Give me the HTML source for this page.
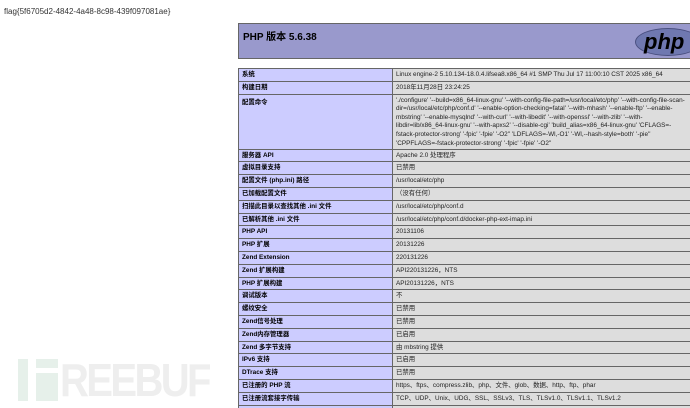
<!DOCTYPE html>
<html><head><meta charset="utf-8"><style>
body{margin:0;width:690px;height:408px;overflow:hidden;background:#fff;font-family:"Liberation Sans","Noto Sans CJK SC",sans-serif;position:relative}
.flag{position:absolute;left:4px;top:7px;font-size:8px;color:#333}
.hd{position:absolute;left:238px;top:23px;width:452px;height:36px;background:#9999cc;border:1px solid #666;border-right:none;box-sizing:border-box;overflow:hidden}
.hd h1{margin:0;position:absolute;left:4px;top:4px;font-size:10px;font-weight:bold;color:#000}
.logo{position:absolute;left:396px;top:4px;width:66px;height:28px;border-radius:50%;background:#6f78b0;border:1px solid #4a5080;color:#000;font:italic bold 22px "Liberation Sans",sans-serif;line-height:26px;text-indent:8px;box-sizing:border-box}
.wrap{position:absolute;left:238px;top:68px;width:452px;overflow:hidden;height:340px}
table{width:460px;border-collapse:collapse;font-size:6.4px}
td{border:1px solid #666;padding:0 3px;height:11.8px;vertical-align:top;line-height:11px;color:#222}
td.e{background:#ccccff;width:147px;font-weight:bold;color:#000}
td.v{background:#dddddd}
td.m{padding-top:2px;height:51px}
td.m div{height:52px;overflow:hidden;line-height:8.6px;padding-right:4px}
.wm{position:absolute;left:18px;top:359px;height:42px}
.wm .b1{position:absolute;left:0;top:0;width:10px;height:42px;background:#e6f0ea}
.wm .b2{position:absolute;left:18px;top:0;width:22px;height:9px;background:#e6f0ea}
.wm .b3{position:absolute;left:18px;top:14px;width:22px;height:28px;background:#e6f0ea}
.wm span{position:absolute;left:42px;top:-6px;font:bold 46px "Liberation Sans",sans-serif;color:#eeeeee;letter-spacing:-3px;transform:scaleX(0.87);transform-origin:left}
</style></head><body>
<div class="flag">flag{5f6705d2-4842-4a48-8c98-439f097081ae}</div>
<div class="wm"><div class="b1"></div><div class="b2"></div><div class="b3"></div><span>REEBUF</span></div>
<div class="hd"><h1>PHP 版本 5.6.38</h1><div class="logo">php</div></div>
<div class="wrap"><table>
<tr><td class="e">系统</td><td class="v">Linux engine-2 5.10.134-18.0.4.lifsea8.x86_64 #1 SMP Thu Jul 17 11:00:10 CST 2025 x86_64</td></tr>
<tr><td class="e">构建日期</td><td class="v">2018年11月28日 23:24:25</td></tr>
<tr><td class="e m">配置命令</td><td class="v m"><div>'./configure' '--build=x86_64-linux-gnu' '--with-config-file-path=/usr/local/etc/php' '--with-config-file-scan-dir=/usr/local/etc/php/conf.d' '--enable-option-checking=fatal' '--with-mhash' '--enable-ftp' '--enable-mbstring' '--enable-mysqlnd' '--with-curl' '--with-libedit' '--with-openssl' '--with-zlib' '--with-libdir=lib/x86_64-linux-gnu' '--with-apxs2' '--disable-cgi' 'build_alias=x86_64-linux-gnu' 'CFLAGS=-fstack-protector-strong' '-fpic' '-fpie' '-O2'' 'LDFLAGS=-Wl,-O1' '-Wl,--hash-style=both' '-pie'' 'CPPFLAGS=-fstack-protector-strong' '-fpic' '-fpie' '-O2''</div></td></tr>
<tr><td class="e">服务器 API</td><td class="v">Apache 2.0 处理程序</td></tr>
<tr><td class="e">虚拟目录支持</td><td class="v">已禁用</td></tr>
<tr><td class="e">配置文件 (php.ini) 路径</td><td class="v">/usr/local/etc/php</td></tr>
<tr><td class="e">已加载配置文件</td><td class="v">（没有任何）</td></tr>
<tr><td class="e">扫描此目录以查找其他 .ini 文件</td><td class="v">/usr/local/etc/php/conf.d</td></tr>
<tr><td class="e">已解析其他 .ini 文件</td><td class="v">/usr/local/etc/php/conf.d/docker-php-ext-imap.ini</td></tr>
<tr><td class="e">PHP API</td><td class="v">20131106</td></tr>
<tr><td class="e">PHP 扩展</td><td class="v">20131226</td></tr>
<tr><td class="e">Zend Extension</td><td class="v">220131226</td></tr>
<tr><td class="e">Zend 扩展构建</td><td class="v">API220131226，NTS</td></tr>
<tr><td class="e">PHP 扩展构建</td><td class="v">API20131226，NTS</td></tr>
<tr><td class="e">调试版本</td><td class="v">不</td></tr>
<tr><td class="e">螺纹安全</td><td class="v">已禁用</td></tr>
<tr><td class="e">Zend信号处理</td><td class="v">已禁用</td></tr>
<tr><td class="e">Zend内存管理器</td><td class="v">已启用</td></tr>
<tr><td class="e">Zend 多字节支持</td><td class="v">由 mbstring 提供</td></tr>
<tr><td class="e">IPv6 支持</td><td class="v">已启用</td></tr>
<tr><td class="e">DTrace 支持</td><td class="v">已禁用</td></tr>
<tr><td class="e">已注册的 PHP 流</td><td class="v">https、ftps、compress.zlib、php、文件、glob、数据、http、ftp、phar</td></tr>
<tr><td class="e">已注册流套接字传输</td><td class="v">TCP、UDP、Unix、UDG、SSL、SSLv3、TLS、TLSv1.0、TLSv1.1、TLSv1.2</td></tr>
<tr><td class="e">&nbsp;</td><td class="v">&nbsp;</td></tr>
</table></div>
</body></html>
